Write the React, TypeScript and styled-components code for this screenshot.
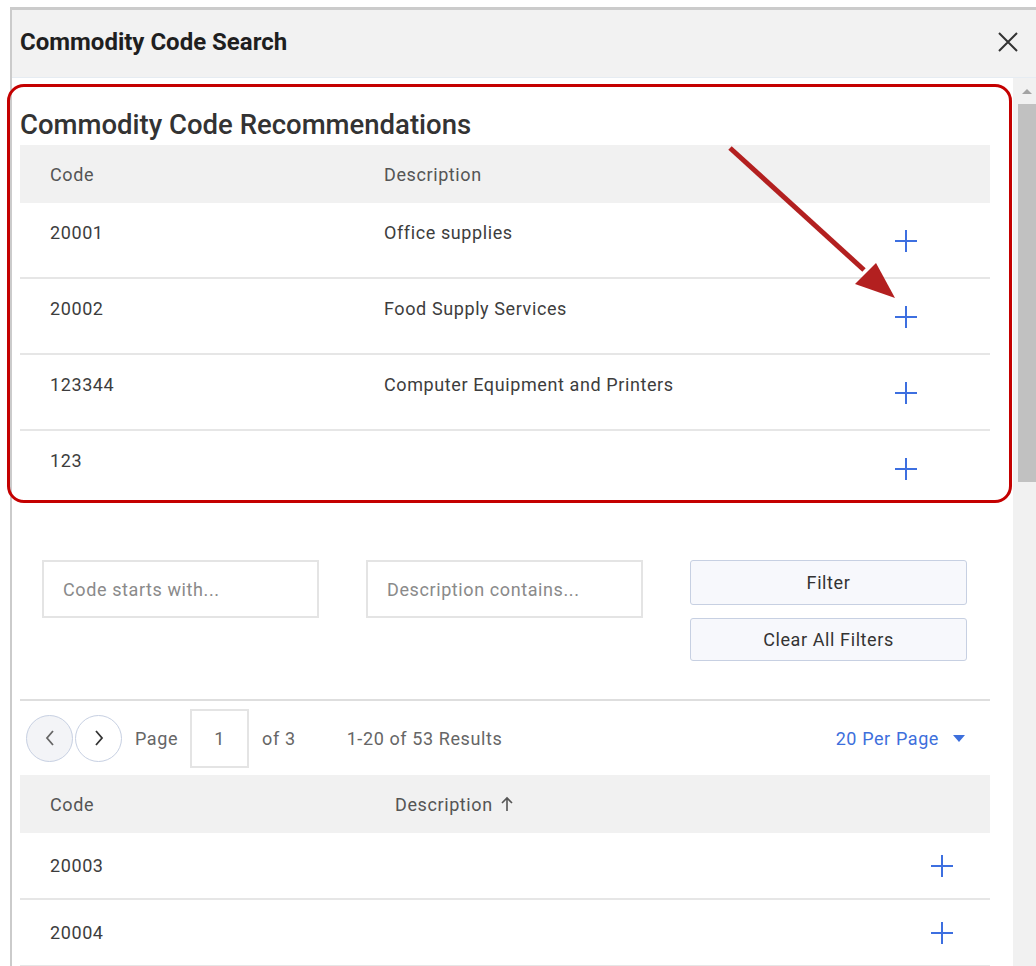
import * as React from 'react';
import styled, { createGlobalStyle } from 'styled-components';

interface CodeRow {
	code: string;
	description: string;
}

const recommendations: Array<CodeRow> = [
	{ code: '20001', description: 'Office supplies' },
	{ code: '20002', description: 'Food Supply Services' },
	{ code: '123344', description: 'Computer Equipment and Printers' },
	{ code: '123', description: '' },
];

const results: Array<CodeRow> = [
	{ code: '20003', description: '' },
	{ code: '20004', description: '' },
];

const GlobalStyle = createGlobalStyle`
	html, body {
		margin: 0;
		padding: 0;
		background: #ffffff;
		font-family: Roboto, "Liberation Sans", Arial, sans-serif;
		overflow: hidden;
	}
`;

const Page = styled.div`
	height: 966px;
	box-sizing: border-box;
	padding: 7px 0 0 10px;
`;

const Modal = styled.div`
	position: relative;
	height: 100%;
	display: flex;
	flex-direction: column;
	border-top: 3px solid #cbcbcb;
	border-left: 2px solid #cbcbcb;
	background: #ffffff;
`;

const Header = styled.div`
	height: 68px;
	box-sizing: border-box;
	flex: none;
	display: flex;
	align-items: center;
	justify-content: space-between;
	padding: 0 16px 4px 8px;
	background: #f2f2f2;
	border-bottom: 1px solid #e6ecf2;
`;

const Title = styled.div`
	font-size: 24px;
	font-weight: 700;
	color: #1f1f1f;
`;

const CloseButton = styled.button`
	border: none;
	background: none;
	padding: 0;
	width: 24px;
	height: 24px;
	display: flex;
	align-items: center;
	justify-content: center;
	cursor: pointer;
`;

const Body = styled.div`
	flex: 1;
	display: flex;
	flex-direction: row;
	min-height: 0;
`;

const Content = styled.div`
	flex: 1;
	padding: 31px 23px 0 8px;
	overflow: hidden;
	font-size: 18px;
	letter-spacing: 0.6px;
`;

const Scrollbar = styled.div`
	width: 23px;
	flex: none;
	display: flex;
	flex-direction: column;
	align-items: flex-end;
	background: #f1f1f1;
`;

const ScrollArrow = styled.div`
	width: 18px;
	height: 26px;
	display: flex;
	align-items: center;
	justify-content: center;
	&::before {
		content: '';
		border-left: 5px solid transparent;
		border-right: 5px solid transparent;
		border-bottom: 5px solid #a3a3a3;
	}
`;

const ScrollThumb = styled.div`
	width: 18px;
	height: 378px;
	background: #c1c1c1;
`;

const SectionTitle = styled.div`
	font-size: 27.5px;
	line-height: 32px;
	font-weight: 500;
	color: #333333;
	margin-bottom: 4px;
	letter-spacing: 0;
`;

const Table = styled.div<{ $desc: number; $action: number }>`
	display: grid;
	grid-template-columns: ${p => p.$desc}px 1fr ${p => p.$action}px;
	color: #3d3d3d;
`;

const HeadCell = styled.div<{ $height: number }>`
	height: ${p => p.$height}px;
	display: flex;
	align-items: center;
	gap: 8px;
	background: #f1f1f1;
	color: #555555;
	padding-left: 30px;
	&:nth-child(3n + 2) {
		padding-left: 0;
	}
	&:nth-child(3n) {
		padding-left: 0;
	}
`;

const Cell = styled.div<{ $height: number; $centered?: boolean; $last?: boolean }>`
	height: ${p => p.$height}px;
	display: flex;
	align-items: ${p => (p.$centered ? 'center' : 'flex-start')};
	padding-top: ${p => (p.$centered ? 0 : 20)}px;
	box-sizing: border-box;
	border-bottom: ${p => (p.$last ? 'none' : '2px solid #e6e6e6')};
	line-height: 20px;
`;

const CodeCell = styled(Cell)`
	padding-left: 30px;
`;

const ActionCell = styled(Cell)<{ $drop?: number }>`
	padding-top: ${p => (p.$centered ? 0 : p.$drop || 0)}px;
`;

const PlusButton = styled.button`
	border: none;
	background: none;
	padding: 0;
	width: 24px;
	height: 24px;
	cursor: pointer;
`;

const Filters = styled.div`
	display: grid;
	grid-template-columns: repeat(3, 277px);
	column-gap: 47px;
	align-items: start;
	padding: 53px 23px 38px 22px;
	border-bottom: 2px solid #dedede;
`;

const FilterInput = styled.input`
	height: 58px;
	box-sizing: border-box;
	border: 2px solid #e4e4e4;
	padding: 0 19px;
	font-family: inherit;
	font-size: 18px;
	letter-spacing: 0.6px;
	color: #333333;
	outline: none;
	&::placeholder {
		color: #8a8a8a;
	}
`;

const ButtonStack = styled.div`
	display: flex;
	flex-direction: column;
	gap: 13px;
`;

const FilterButton = styled.button<{ $height: number }>`
	height: ${p => p.$height}px;
	border: 1.5px solid #c7d0e2;
	border-radius: 3px;
	background: #f7f8fc;
	font-family: inherit;
	font-size: 18px;
	letter-spacing: 0.6px;
	color: #333333;
	cursor: pointer;
`;

const Pager = styled.div`
	height: 74px;
	display: flex;
	align-items: center;
	padding: 0 25px 0 6px;
	color: #666666;
`;

const PagerCircle = styled.button<{ $disabled?: boolean }>`
	width: 47px;
	height: 47px;
	border-radius: 50%;
	border: 1.5px solid #c7d0e2;
	background: ${p => (p.$disabled ? '#f3f4f7' : '#ffffff')};
	display: flex;
	align-items: center;
	justify-content: center;
	padding: 0;
	margin-right: 2px;
	cursor: pointer;
`;

const PagerText = styled.span<{ $gap: number }>`
	margin-left: ${p => p.$gap}px;
`;

const PageBox = styled.div`
	width: 59px;
	height: 59px;
	box-sizing: border-box;
	border: 2px solid #e4e4e4;
	margin-left: 12px;
	display: flex;
	align-items: center;
	justify-content: center;
	color: #666666;
`;

const PerPage = styled.div`
	margin-left: auto;
	display: flex;
	align-items: center;
	gap: 14px;
	color: #3d6fdc;
`;

const Caret = styled.span`
	border-left: 6px solid transparent;
	border-right: 6px solid transparent;
	border-top: 7px solid #3d6fdc;
`;

const Highlight = styled.div`
	position: absolute;
	left: -5px;
	top: 74px;
	width: 1005px;
	height: 419px;
	box-sizing: border-box;
	border: 3px solid #c40000;
	border-radius: 17px;
	pointer-events: none;
`;

const Pointer = styled.svg`
	position: absolute;
	left: 0;
	top: 0;
	pointer-events: none;
`;

const PlusIcon = () => (
	<svg width="24" height="24" viewBox="0 0 24 24">
		<path d="M12 1v22M1 12h22" stroke="#3d6fe0" strokeWidth="2" fill="none" />
	</svg>
);

const Chevron = ({ left, color }: { left?: boolean; color: string }) => (
	<svg width="12" height="18" viewBox="0 0 12 18">
		<path d={left ? 'M9 2 3 9l6 7' : 'M3 2l6 7-6 7'} stroke={color} strokeWidth="1.8" fill="none" />
	</svg>
);

const SortUp = () => (
	<svg width="12" height="16" viewBox="0 0 12 16">
		<path d="M6 15V2M1 7l5-5 5 5" stroke="#555" strokeWidth="1.6" fill="none" />
	</svg>
);

const CodeTable = ({ rows, desc, action, head, height, centered, drop, sorted }: {
	rows: Array<CodeRow>;
	desc: number;
	action: number;
	head: number;
	height: number;
	centered?: boolean;
	drop?: number;
	sorted?: boolean;
}) => (
	<Table $desc={desc} $action={action}>
		<HeadCell $height={head}>Code</HeadCell>
		<HeadCell $height={head}>Description{sorted && <SortUp />}</HeadCell>
		<HeadCell $height={head} />
		{rows.map((row, idx) => {
			const last = idx === rows.length - 1 && !centered;
			return (
				<React.Fragment key={row.code}>
					<CodeCell $height={height} $centered={centered} $last={last}>{row.code}</CodeCell>
					<Cell $height={height} $centered={centered} $last={last}>{row.description}</Cell>
					<ActionCell $height={height} $centered={centered} $last={last} $drop={drop}>
						<PlusButton aria-label="Add"><PlusIcon /></PlusButton>
					</ActionCell>
				</React.Fragment>
			);
		})}
	</Table>
);

export default function App() {
	return (
		<Page>
			<GlobalStyle />
			<Modal>
				<Header>
					<Title>Commodity Code Search</Title>
					<CloseButton aria-label="Close">
						<svg width="22" height="22" viewBox="0 0 22 22">
							<path d="M2 2l18 18M20 2 2 20" stroke="#333" strokeWidth="2" fill="none" />
						</svg>
					</CloseButton>
				</Header>
				<Body>
					<Content>
						<SectionTitle>Commodity Code Recommendations</SectionTitle>
						<CodeTable rows={recommendations} desc={364} action={96} head={58} height={76} drop={26} />
						<Filters>
							<FilterInput placeholder="Code starts with..." />
							<FilterInput placeholder="Description contains..." />
							<ButtonStack>
								<FilterButton $height={45}>Filter</FilterButton>
								<FilterButton $height={43}>Clear All Filters</FilterButton>
							</ButtonStack>
						</Filters>
						<Pager>
							<PagerCircle $disabled aria-label="Previous page"><Chevron left color="#666" /></PagerCircle>
							<PagerCircle aria-label="Next page"><Chevron color="#333" /></PagerCircle>
							<PagerText $gap={11}>Page</PagerText>
							<PageBox>1</PageBox>
							<PagerText $gap={13}>of 3</PagerText>
							<PagerText $gap={51}>1-20 of 53 Results</PagerText>
							<PerPage>20 Per Page<Caret /></PerPage>
						</Pager>
						<CodeTable rows={results} desc={375} action={60} head={58} height={67} centered sorted />
					</Content>
					<Scrollbar>
						<ScrollArrow />
						<ScrollThumb />
					</Scrollbar>
				</Body>
				<Highlight />
				<Pointer width="1024" height="400" viewBox="0 0 1024 400">
					<path d="M718 138 L852 260" stroke="#b32020" strokeWidth="5" fill="none" />
					<path d="M883 288 L843 274 L864 253 Z" fill="#b32020" />
				</Pointer>
			</Modal>
		</Page>
	);
}
